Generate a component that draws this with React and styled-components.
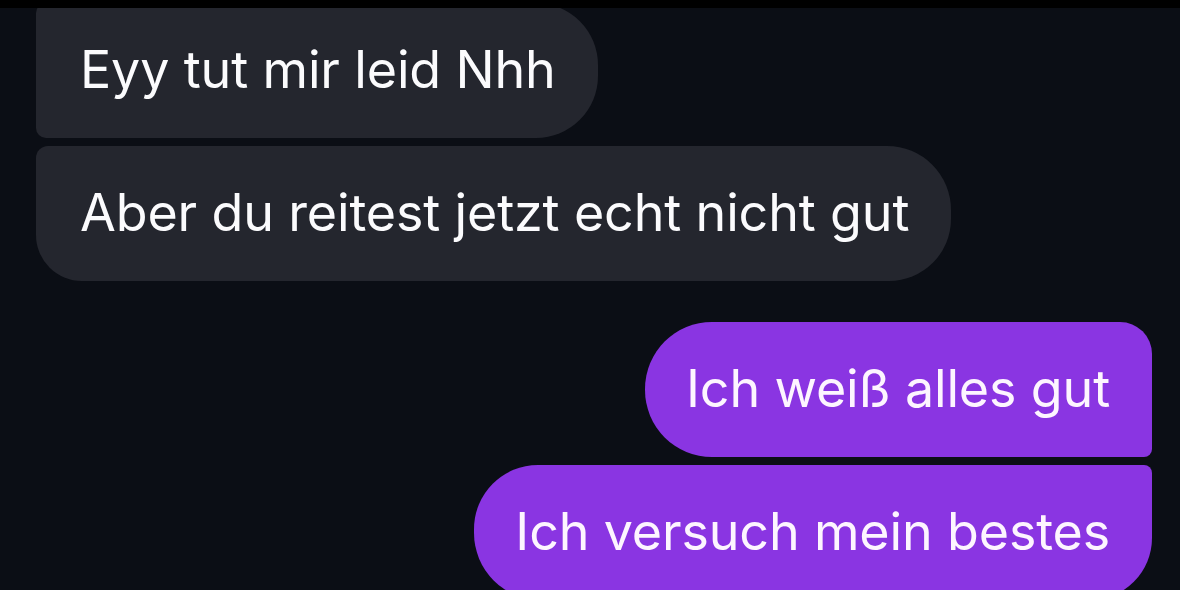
import React from 'react'
import styled, { createGlobalStyle } from 'styled-components'

const messages = [
  { id: 1, text: 'Eyy tut mir leid Nhh', mine: false, shape: 'first' },
  { id: 2, text: 'Aber du reitest jetzt echt nicht gut', mine: false, shape: 'last' },
  { id: 3, text: 'Ich weiß alles gut', mine: true, shape: 'first' },
  { id: 4, text: 'Ich versuch mein bestes', mine: true, shape: 'last' },
]

// corner radii per bubble position in a group: TL TR BR BL
const radii = {
  theirs: {
    first: '10px 62px 62px 10px',
    last: '12px 64px 62px 46px',
  },
  mine: {
    first: '67px 32px 8px 67px',
    last: '64px 8px 62px 67px',
  },
}

const App = () => {
  const groups = [
    messages.filter((m) => !m.mine),
    messages.filter((m) => m.mine),
  ]

  return (
    <>
      <GlobalStyle />
      <Screen>
        <StatusEdge />
        <Thread>
          {groups.map((group, i) => (
            <Group key={i} $mine={group[0].mine}>
              {group.map((m) => (
                <Bubble key={m.id} $mine={m.mine} $shape={m.shape}>
                  {m.text}
                </Bubble>
              ))}
            </Group>
          ))}
        </Thread>
      </Screen>
    </>
  )
}

const GlobalStyle = createGlobalStyle`
  html, body {
    margin: 0;
    padding: 0;
    background: #0b0e15;
  }
  body {
    font-family: Inter, "Liberation Sans", Arial, sans-serif;
    -webkit-font-smoothing: antialiased;
  }
`

const Screen = styled.div`
  width: 1180px;
  height: 590px;
  display: flex;
  flex-direction: column;
  background: #0b0e15;
  overflow: hidden;
`

const StatusEdge = styled.div`
  height: 8px;
  flex-shrink: 0;
  background: #000;
  position: relative;
  z-index: 1;
`

const Thread = styled.div`
  flex: 1;
  display: flex;
  flex-direction: column;
  gap: 41px;
  padding: 0 28px 0 36px;
  margin-top: -5px;
`

const Group = styled.div`
  display: flex;
  flex-direction: column;
  align-items: ${(p) => (p.$mine ? 'flex-end' : 'flex-start')};
  gap: 8px;
`

const Bubble = styled.div`
  box-sizing: border-box;
  height: 135px;
  display: flex;
  align-items: center;
  padding: ${(p) => (p.$mine ? '0 42px 3px 41px' : '0 42px 3px 44px')};
  border-radius: ${(p) => radii[p.$mine ? 'mine' : 'theirs'][p.$shape]};
  background: ${(p) => (p.$mine ? '#8a35e2' : '#24262e')};
  color: ${(p) => (p.$mine ? '#fdf5ff' : '#fbfbfd')};
  font-size: 52px;
  letter-spacing: -0.15px;
  white-space: nowrap;
  flex-shrink: 0;
`

export default App
